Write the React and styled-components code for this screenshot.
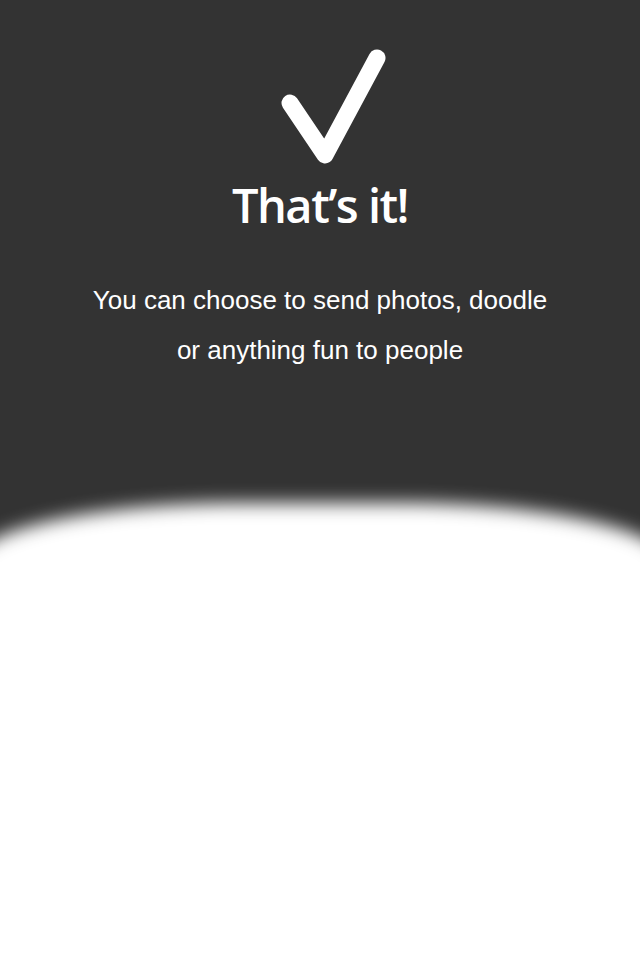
import React from "react";
import styled, { createGlobalStyle } from "styled-components";

const GlobalStyle = createGlobalStyle`
  html, body {
    margin: 0;
    padding: 0;
    background: #333333;
  }
`;

const Page = styled.div`
  width: 640px;
  height: 960px;
  overflow: hidden;
  background-color: #333333;
  display: flex;
  flex-direction: column;
`;

const Intro = styled.div`
  display: flex;
  flex-direction: column;
  align-items: center;
  padding-top: 45px;
`;

const CheckIcon = styled.svg`
  width: 110px;
  height: 120px;
  display: block;
  margin-left: 28px;
`;

const Title = styled.h1`
  margin: 10px 0 0;
  font-family: "Open Sans", "Liberation Sans", sans-serif;
  font-weight: 600;
  font-size: 47px;
  letter-spacing: -1.5px;
  line-height: 60px;
  color: #ffffff;
`;

const Message = styled.p`
  margin: 40px 0 0;
  font-family: "Liberation Sans", Arial, sans-serif;
  font-size: 26px;
  line-height: 50px;
  color: #ffffff;
  text-align: center;
`;

const Sheet = styled.div`
  flex: none;
  height: 520px;
  margin: 0 -30px;
  margin-top: ${(p) => p.offset}px;
  background-color: #ffffff;
  border-radius: 270px 270px 0 0 / 62px 62px 0 0;
  filter: blur(9px);
`;

function Check() {
  return (
    <CheckIcon viewBox="0 0 110 120">
      <path
        d="M11 58 L46 110 L98 13"
        fill="none"
        stroke="#ffffff"
        strokeWidth="17"
        strokeLinecap="round"
        strokeLinejoin="round"
      />
    </CheckIcon>
  );
}

function App() {
  return (
    <>
      <GlobalStyle />
      <Page>
        <Intro>
          <Check />
          <Title>That’s it!</Title>
          <Message>
            You can choose to send photos, doodle
            <br />
            or anything fun to people
          </Message>
        </Intro>
        <Sheet offset={128} />
      </Page>
    </>
  );
}

export default App;
